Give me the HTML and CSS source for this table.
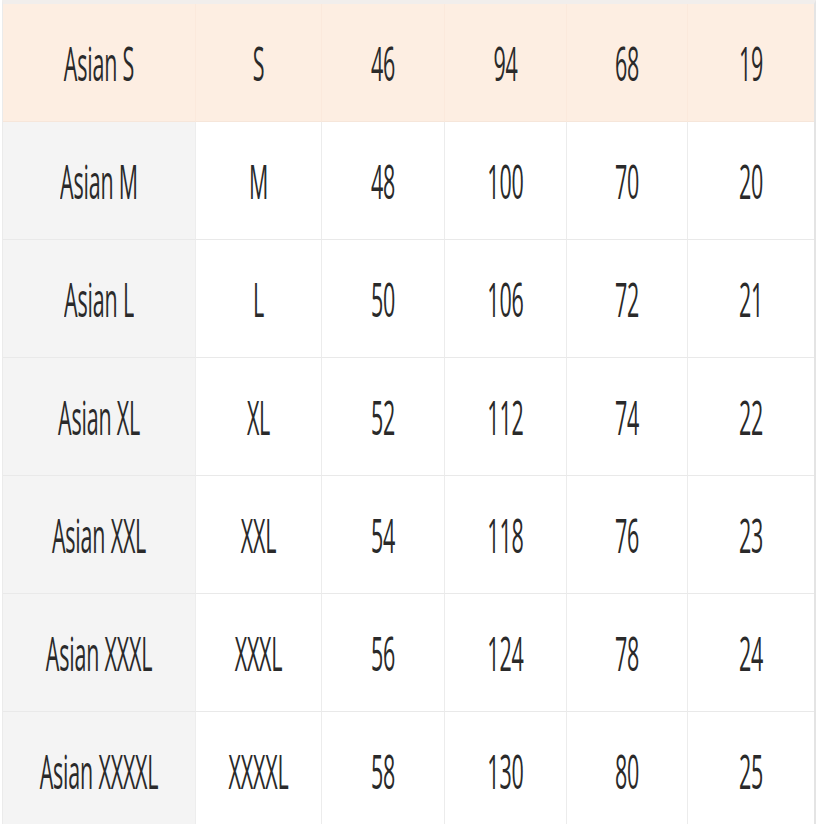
FILE: index.html
```html
<!DOCTYPE html>
<html>
<head>
<meta charset="utf-8">
<link rel="stylesheet" href="styles.css">
</head>
<body>
<div class="chart">
  <div class="row head">
    <div class="cell first"><span class="t">Asian S</span></div>
    <div class="cell"><span class="t">S</span></div>
    <div class="cell"><span class="t">46</span></div>
    <div class="cell"><span class="t">94</span></div>
    <div class="cell"><span class="t">68</span></div>
    <div class="cell"><span class="t">19</span></div>
  </div>
  <div class="row">
    <div class="cell first"><span class="t">Asian M</span></div>
    <div class="cell"><span class="t">M</span></div>
    <div class="cell"><span class="t">48</span></div>
    <div class="cell"><span class="t">100</span></div>
    <div class="cell"><span class="t">70</span></div>
    <div class="cell"><span class="t">20</span></div>
  </div>
  <div class="row">
    <div class="cell first"><span class="t">Asian L</span></div>
    <div class="cell"><span class="t">L</span></div>
    <div class="cell"><span class="t">50</span></div>
    <div class="cell"><span class="t">106</span></div>
    <div class="cell"><span class="t">72</span></div>
    <div class="cell"><span class="t">21</span></div>
  </div>
  <div class="row">
    <div class="cell first"><span class="t">Asian XL</span></div>
    <div class="cell"><span class="t">XL</span></div>
    <div class="cell"><span class="t">52</span></div>
    <div class="cell"><span class="t">112</span></div>
    <div class="cell"><span class="t">74</span></div>
    <div class="cell"><span class="t">22</span></div>
  </div>
  <div class="row">
    <div class="cell first"><span class="t">Asian XXL</span></div>
    <div class="cell"><span class="t">XXL</span></div>
    <div class="cell"><span class="t">54</span></div>
    <div class="cell"><span class="t">118</span></div>
    <div class="cell"><span class="t">76</span></div>
    <div class="cell"><span class="t">23</span></div>
  </div>
  <div class="row">
    <div class="cell first"><span class="t">Asian XXXL</span></div>
    <div class="cell"><span class="t">XXXL</span></div>
    <div class="cell"><span class="t">56</span></div>
    <div class="cell"><span class="t">124</span></div>
    <div class="cell"><span class="t">78</span></div>
    <div class="cell"><span class="t">24</span></div>
  </div>
  <div class="row">
    <div class="cell first"><span class="t">Asian XXXXL</span></div>
    <div class="cell"><span class="t">XXXXL</span></div>
    <div class="cell"><span class="t">58</span></div>
    <div class="cell"><span class="t">130</span></div>
    <div class="cell"><span class="t">80</span></div>
    <div class="cell"><span class="t">25</span></div>
  </div>
</div>
</body>
</html>
```
FILE: styles.css
```css
html, body {
  margin: 0;
  padding: 0;
  background: #ffffff;
  overflow: hidden;
}
body {
  width: 824px;
  height: 824px;
  font-family: "Open Sans", "Noto Sans", sans-serif;
  color: #2a2a2a;
}
.chart {
  margin-left: 2px;
  width: 811px;
  border-left: 1px solid #ebebeb;
  border-right: 2px solid #e4e4e4;
  border-top: 4px solid #f1eeec;
}
.row {
  display: grid;
  grid-template-columns: 193px 126px 123px 122px 121px 126px;
  height: 118px;
}
.cell {
  display: flex;
  align-items: center;
  justify-content: center;
  border-right: 1px solid #ececec;
  border-bottom: 1px solid #e9e9e9;
  background: #ffffff;
  overflow: visible;
}
.cell:last-child {
  border-right: none;
}
.cell.first {
  background: #f4f4f4;
  border-right-color: #ededed;
}
.head .cell,
.head .cell.first {
  background: #fdeee2;
  border-right-color: #fbe9dc;
  border-bottom-color: #f6e6da;
}
.t {
  display: inline-block;
  font-size: 21.5px;
  line-height: 1;
  white-space: nowrap;
  transform: scaleY(2.2);
  letter-spacing: -0.2px;
}
```
